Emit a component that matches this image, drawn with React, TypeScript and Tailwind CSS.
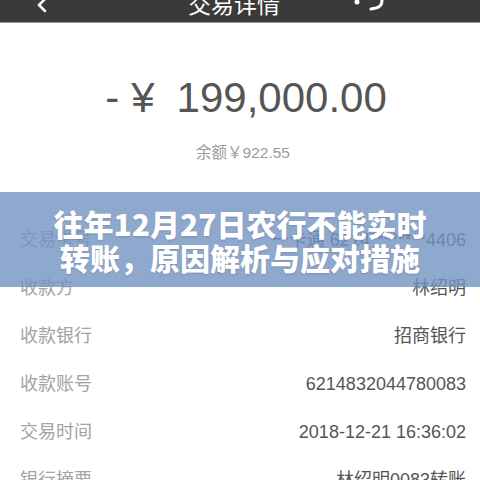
import { ChevronLeft } from "lucide-react"

const rows = [
  { label: "交易卡号", value: "一卡通 6214********4406" },
  { label: "收款方", value: "林绍明" },
  { label: "收款银行", value: "招商银行" },
  { label: "收款账号", value: "6214832044780083" },
  { label: "交易时间", value: "2018-12-21 16:36:02" },
  { label: "银行摘要", value: "林绍明0083转账" },
]

const font = { fontFamily: '"Liberation Sans", "Noto Sans CJK SC", sans-serif' }

const App = () => {
  return (
    <div className="relative w-[480px] h-[480px] overflow-hidden bg-white" style={font}>
      <div className="h-[23px] bg-[#3a3a3a] border-b border-[#9c9c9c] overflow-hidden">
        <div className="flex items-center justify-between h-[30px] -mt-[10px] px-[30px]">
          <ChevronLeft className="text-white" size={24} strokeWidth={2.5} />
          <span className="text-white text-[23px] leading-none ml-[62px] mt-[1px]">交易详情</span>
          <svg width="34" height="30" viewBox="0 0 34 30" className="mr-[64px]">
            <circle cx="5" cy="12" r="2.5" fill="white" />
            <path d="M24 3 C32 5 32 16 24 18 L19 19" stroke="white" strokeWidth="3" fill="none" strokeLinecap="round" />
          </svg>
        </div>
      </div>

      <div className="flex flex-col items-center pt-[54px]">
        <div className="flex items-center text-[#555] text-[42px] leading-none font-light ml-[12px]">
          <span className="mr-[12px]">-</span>
          <span className="mr-[22px]">¥</span>
          <span>199,000.00</span>
        </div>
        <div className="mt-[26px] ml-[6px] text-[15.5px] leading-none text-[#9a9a9a]">余额￥922.55</div>
      </div>

      <div className="mt-[56px] flex flex-col">
        {rows.map((r) => (
          <div key={r.label} className="h-[48px] flex items-center justify-between pl-[20px] pr-[14px] text-[18px]">
            <span className="text-[#a3a3a3]">{r.label}</span>
            <span className="text-[#555]">{r.value}</span>
          </div>
        ))}
      </div>

      <div className="absolute left-0 right-0 top-[192px] h-[95px] bg-[#7392c0]/80 flex flex-col items-center justify-center">
        <div
          className="text-white text-[30px] font-black leading-[34px] text-center [text-shadow:0_1px_2px_rgba(0,0,0,0.15)]"
          style={{ fontFamily: '"Noto Sans CJK SC", "Noto Sans", sans-serif' }}
        >
          <div>往年12月27日农行不能实时</div>
          <div>转账，原因解析与应对措施</div>
        </div>
      </div>
    </div>
  )
}

export default App
